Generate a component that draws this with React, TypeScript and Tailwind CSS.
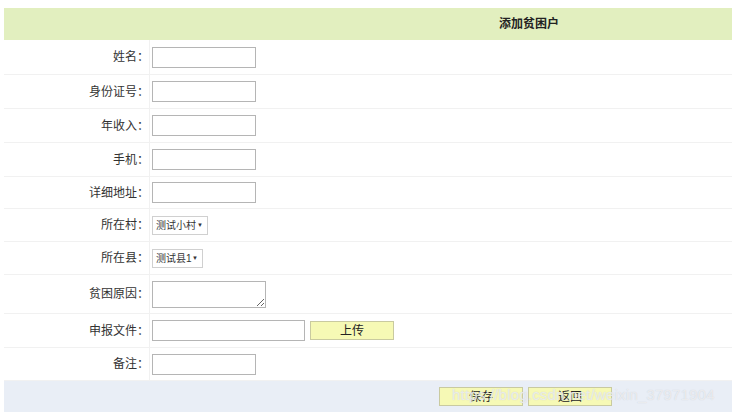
import React from 'react';

const font = { fontFamily: '"Liberation Sans", "Noto Sans CJK SC", sans-serif' };

const Row = ({ label, h, children }: { label: string; h: string; children: React.ReactNode }) => (
  <div className={`flex border-b border-[#f1f1f1] ${h}`}>
    <div className="w-[146px] shrink-0 flex items-center justify-end pr-0 border-r border-[#f1f1f1] text-[12px] text-[#333] whitespace-nowrap">
      {label}：
    </div>
    <div className="flex items-center pl-[2px] gap-[5px]">{children}</div>
  </div>
);

const TextInput = ({ w = 'w-[104px]' }: { w?: string }) => (
  <input type="text" className={`${w} h-[21px] border border-[#b5b5b5] bg-white outline-none`} />
);

const Select = ({ value, w }: { value: string; w: string }) => (
  <div className={`${w} h-[19px] border border-[#d0d0d0] bg-white flex items-center justify-between pl-[3px] pr-[4px] text-[10px] text-[#333] whitespace-nowrap`}>
    <span>{value}</span>
    <span className="text-[6px]">▼</span>
  </div>
);

const YellowButton = ({ label }: { label: string }) => (
  <button className="w-[84px] h-[19px] bg-[#f6f9b5] border border-[#c9caa0] text-[12px] text-[#222] leading-none">
    {label}
  </button>
);

export default function App() {
  return (
    <div className="w-[732px] h-[412px] overflow-hidden bg-white pl-[4px] pt-[8px] relative" style={font}>
      <div className="h-[32px] bg-[#e2efbf] flex items-center pl-[495px] text-[12px] font-bold text-[#222]">
        添加贫困户
      </div>
      <Row label="姓名" h="h-[35px]"><TextInput /></Row>
      <Row label="身份证号" h="h-[34px]"><TextInput /></Row>
      <Row label="年收入" h="h-[34px]"><TextInput /></Row>
      <Row label="手机" h="h-[34px]"><TextInput /></Row>
      <Row label="详细地址" h="h-[32px]"><TextInput /></Row>
      <Row label="所在村" h="h-[33px]"><Select value="测试小村" w="w-[56px]" /></Row>
      <Row label="所在县" h="h-[33px]"><Select value="测试县1" w="w-[51px]" /></Row>
      <Row label="贫困原因" h="h-[39px]">
        <textarea className="w-[114px] h-[27px] border border-[#b5b5b5] outline-none resize-y" />
      </Row>
      <Row label="申报文件" h="h-[34px]">
        <TextInput w="w-[153px]" />
        <YellowButton label="上传" />
      </Row>
      <Row label="备注" h="h-[33px]"><TextInput /></Row>
      <div className="h-[40px] bg-[#e9eef6] flex items-start pt-[6px] pl-[435px] gap-[5px]">
        <YellowButton label="保存" />
        <YellowButton label="返回" />
      </div>
      <div
        className="absolute left-[452px] top-[384px] text-[15px] text-white/60 tracking-[0.2px] pointer-events-none"
        style={{ textShadow: '0 0 1px #c4c8d0' }}
      >
        https://blog.csdn.net/weixin_37971904
      </div>
    </div>
  );
}
